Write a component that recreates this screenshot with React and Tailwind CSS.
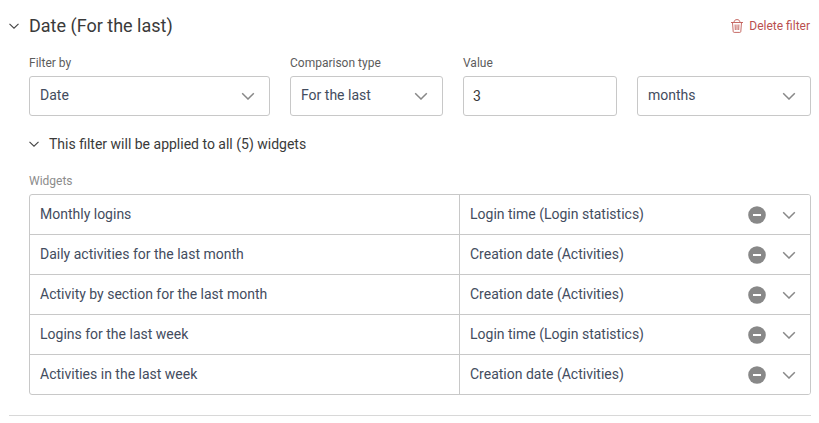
import React, { useState } from "react";

const widgets = [
  { name: "Monthly logins", field: "Login time (Login statistics)" },
  { name: "Daily activities for the last month", field: "Creation date (Activities)" },
  { name: "Activity by section for the last month", field: "Creation date (Activities)" },
  { name: "Logins for the last week", field: "Login time (Login statistics)" },
  { name: "Activities in the last week", field: "Creation date (Activities)" },
];

function SmallChevron() {
  return (
    <svg width="10" height="6" viewBox="0 0 10 6" fill="none" stroke="#444" strokeWidth="1.1" aria-hidden="true">
      <path d="M.5.8 5 5.200 9.500.8" />
    </svg>
  );
}

function Chevron() {
  return (
    <svg width="14" height="8" viewBox="0 0 14 8" fill="none" stroke="#888" strokeWidth="1.5" aria-hidden="true">
      <path d="M1.200 1.300 7 7l5.800-5.700" />
    </svg>
  );
}

function TrashIcon() {
  return (
    <svg width="12" height="14" viewBox="0 0 12 14" fill="none" stroke="#bf5a55" strokeWidth="0.9" aria-hidden="true">
      <path d="M0 3.500h12M3 3.300C3.200 1.500 4.200.6 6 .6s2.800.9 3 2.700M1.500 3.500l.7 9c.1.600.4.900 1 .9h5.600c.6 0 .9-.3 1-.9l.7-9M4.100 5.500l.2 5.500M6 5.500V11M7.900 5.500L7.700 11" />
    </svg>
  );
}

function SelectField({ id, label, options }) {
  return (
    <div className="grid items-center">
      <select
        id={id}
        aria-label={label}
        className="col-start-1 row-start-1 h-10 w-full appearance-none rounded-[3px] border border-[#c8c8c8] bg-white pr-10 pb-[2px] pl-[10px] text-sm text-[#434c5e]"
      >
        {options.map((o) => (
          <option key={o}>{o}</option>
        ))}
      </select>
      <span className="pointer-events-none col-start-1 row-start-1 mr-[15px] justify-self-end">
        <Chevron />
      </span>
    </div>
  );
}

function Field({ id, label, children }) {
  return (
    <div className="flex flex-col gap-[5px]">
      <label htmlFor={id} className="text-xs leading-4 text-[#5c5c5c]">
        {label}
      </label>
      {children}
    </div>
  );
}

export default function App() {
  const [value, setValue] = useState("3");
  return (
    <main className="bg-white pt-3 pr-2 pl-[9px] font-['Roboto',sans-serif] text-[#3a3a3a]">
      <section className="border-b border-[#d8d8d8] pb-5">
        <header className="flex h-7 items-center justify-between">
          <h2>
            <button type="button" className="flex items-center gap-[10px] text-lg leading-7">
              <SmallChevron />
              Date (For the last)
            </button>
          </h2>
          <button type="button" className="flex items-center gap-[6px] pr-px text-xs leading-4 text-[#b94f4f]">
            <TrashIcon />
            Delete filter
          </button>
        </header>

        <div className="pt-[15px] pl-5">
          <div className="grid grid-cols-[241fr_153fr_154fr_174fr] items-end gap-5">
            <Field id="filter-by" label="Filter by">
              <SelectField id="filter-by" options={["Date"]} />
            </Field>
            <Field id="comparison" label="Comparison type">
              <SelectField id="comparison" options={["For the last"]} />
            </Field>
            <Field id="value" label="Value">
              <input
                id="value"
                type="text"
                value={value}
                onChange={(e) => setValue(e.target.value)}
                className="h-10 w-full rounded-[3px] border border-[#c8c8c8] bg-white px-[9px] text-sm text-[#3a3a3a]"
              />
            </Field>
            <SelectField id="unit" label="Unit" options={["months"]} />
          </div>

          <button type="button" className="mt-[18px] flex items-center gap-[10px] text-sm leading-5">
            <SmallChevron />
            This filter will be applied to all (5) widgets
          </button>

          <h3 id="widgets-label" className="mt-[19px] mb-[5px] text-xs leading-4 text-[#8c8c8c]">
            Widgets
          </h3>
          <div className="overflow-hidden rounded-[3px] border border-[#c8c8c8]">
            <table
              aria-labelledby="widgets-label"
              className="w-full table-fixed border-separate border-spacing-0 text-sm text-[#434c5e]"
            >
              <colgroup>
                <col className="w-[55%]" />
                <col />
              </colgroup>
              <tbody>
                {widgets.map((w, i) => (
                  <tr key={w.name} className="group">
                    <td className="border-b border-[#c8c8c8] p-0 pb-[2px] pl-[10px] group-last:border-b-0">
                      <label htmlFor={`field-${i}`}>{w.name}</label>
                    </td>
                    <td className="border-b border-l border-[#c8c8c8] p-0 group-last:border-b-0">
                      <div className="grid items-center">
                        <select
                          id={`field-${i}`}
                          className="col-start-1 row-start-1 h-[39px] w-full appearance-none bg-white pr-20 pb-[2px] pl-[10px] text-sm"
                        >
                          <option>{w.field}</option>
                        </select>
                        <div className="pointer-events-none col-start-1 row-start-1 mr-[14px] flex items-center gap-4 justify-self-end">
                          <button type="button" aria-label={`Remove ${w.name}`} className="pointer-events-auto">
                            <svg width="18" height="18" viewBox="0 0 18 18" className="block" aria-hidden="true">
                              <circle cx="9" cy="9" r="8.800" fill="#888" />
                              <rect x="5" y="8" width="8" height="2" fill="#fff" />
                            </svg>
                          </button>
                          <Chevron />
                        </div>
                      </div>
                    </td>
                  </tr>
                ))}
              </tbody>
            </table>
          </div>
        </div>
      </section>
    </main>
  );
}
